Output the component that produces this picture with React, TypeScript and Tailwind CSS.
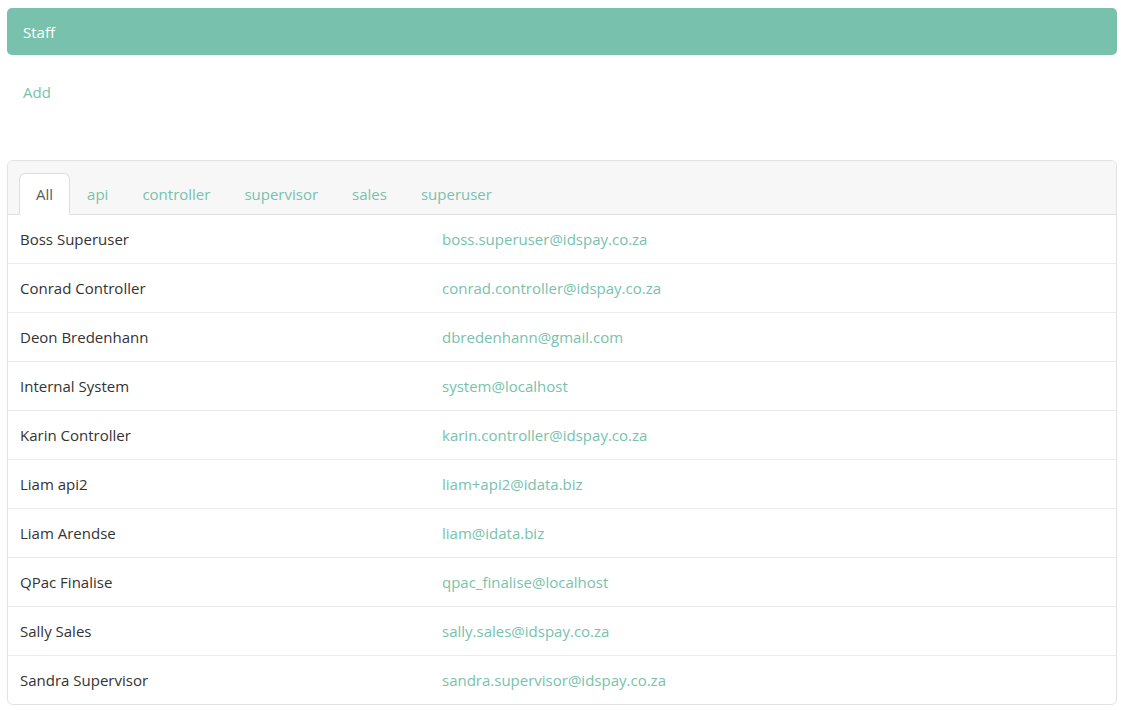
import { useState } from "react";

const staff = [
  { name: "Boss Superuser", email: "boss.superuser@idspay.co.za" },
  { name: "Conrad Controller", email: "conrad.controller@idspay.co.za" },
  { name: "Deon Bredenhann", email: "dbredenhann@gmail.com" },
  { name: "Internal System", email: "system@localhost" },
  { name: "Karin Controller", email: "karin.controller@idspay.co.za" },
  { name: "Liam api2", email: "liam+api2@idata.biz" },
  { name: "Liam Arendse", email: "liam@idata.biz" },
  { name: "QPac Finalise", email: "qpac_finalise@localhost" },
  { name: "Sally Sales", email: "sally.sales@idspay.co.za" },
  { name: "Sandra Supervisor", email: "sandra.supervisor@idspay.co.za" },
];

const tabs = ["All", "api", "controller", "supervisor", "sales", "superuser"];

export default function App() {
  const [active, setActive] = useState("All");

  return (
    <div className="min-h-screen bg-white pl-[7px] pt-[8px] font-['Open_Sans',sans-serif] text-[15px] text-[#333]">
      <div className="flex h-[47px] w-[1110px] items-center rounded-[5px] bg-[#78c2ad] px-[16px] pt-px text-white">
        Staff
      </div>

      <div className="px-[16px] pt-[26px] leading-[23px]">
        <a href="#" className="text-[#78c2ad]">Add</a>
      </div>

      <div className="mt-[56px] w-[1110px] overflow-hidden rounded-[6px] border border-[#e2e2e2]">
        <div className="flex border-b border-[#dedede] bg-[#f7f7f7] px-[11px] pt-[12px]">
          {tabs.map((t) => (
            <button
              key={t}
              onClick={() => setActive(t)}
              className={
                t === active
                  ? "-mb-px rounded-t-[6px] border border-[#dedede] border-b-white bg-white px-[16px] py-[8px] leading-[24px] text-[#5a5a5a]"
                  : "-mb-px border border-transparent px-[16px] py-[8px] leading-[24px] text-[#78c2ad]"
              }
            >
              {t}
            </button>
          ))}
        </div>

        <div>
          {staff.map((s, i) => (
            <div
              key={s.email}
              className={
                i < staff.length - 1
                  ? "flex h-[49px] items-center border-b border-[#ececec] pt-px"
                  : "flex h-[48px] items-center pt-px"
              }
            >
              <div className="w-[422px] px-[12px]">{s.name}</div>
              <div className="px-[12px] text-[#78c2ad]">{s.email}</div>
            </div>
          ))}
        </div>
      </div>
    </div>
  );
}
